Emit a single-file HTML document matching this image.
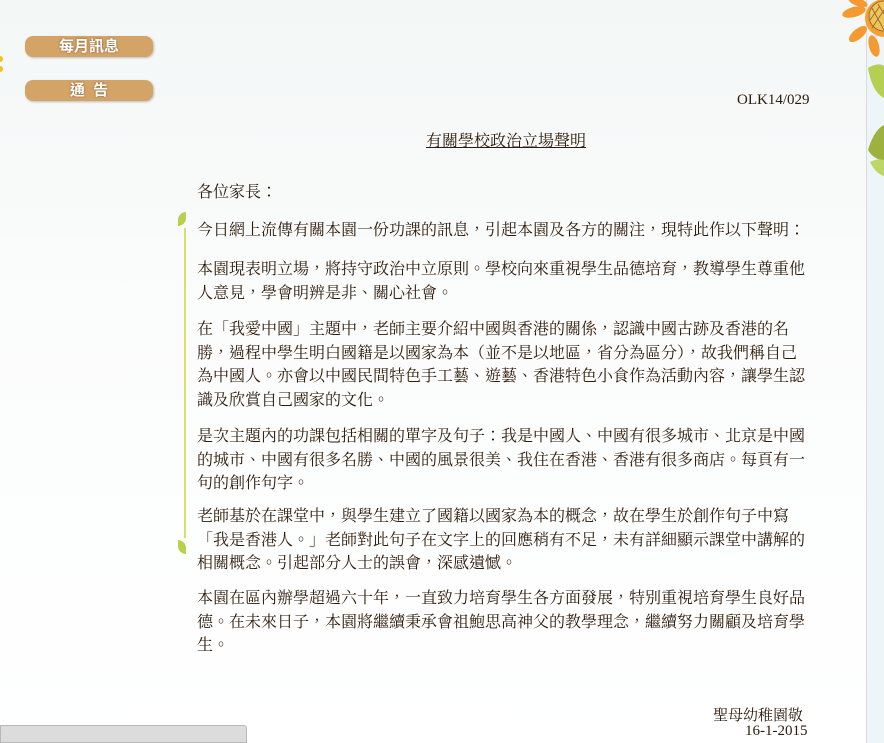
<!DOCTYPE html>
<html lang="zh-Hant"><head><meta charset="utf-8"><style>
html,body{margin:0;padding:0;width:884px;height:743px;overflow:hidden;background:#f4f8f7;}
body{position:relative;font-family:"Liberation Serif","Noto Serif CJK TC","Noto Serif CJK SC",serif;color:#2e1a08;}
.panel{position:absolute;left:0;top:0;width:866px;height:743px;background:linear-gradient(180deg,#f3f7f6 0%,#fbfcfc 40%,#fff 100%);}
.strip{position:absolute;left:866px;top:0;width:18px;height:743px;background:#eef5f8;border-left:1px solid #d8dcdc;}
.btn{position:absolute;left:25px;width:128px;height:21px;background:#d4a366;border-radius:8px;color:#fff;font:bold 15px/21px "Liberation Sans","Noto Sans CJK TC",sans-serif;text-align:center;box-shadow:1px 1px 2px #bbb;text-shadow:0 0 2px #7a5a30;}
.p{position:absolute;left:197px;width:620px;font-size:16px;line-height:23.5px;}
.vline{position:absolute;left:184px;top:228px;width:2px;height:310px;background:#d6e06a;}
.leaf{position:absolute;width:8px;height:14px;background:#b9d04a;border-radius:8px 0 8px 0;}
</style></head><body>
<div class="panel"></div>
<div class="strip"></div>
<svg style="position:absolute;left:840px;top:0" width="44" height="200">
<g fill="#f59a30"><ellipse cx="14" cy="12" rx="12" ry="5" transform="rotate(-15 14 12)"/><ellipse cx="18" cy="34" rx="11" ry="5" transform="rotate(-40 18 34)"/><ellipse cx="34" cy="46" rx="5" ry="11" transform="rotate(-15 34 46)"/><ellipse cx="18" cy="2" rx="10" ry="4" transform="rotate(20 18 2)"/></g>
<circle cx="44" cy="18" r="19" fill="#f5a034"/>
<circle cx="44" cy="16" r="15" fill="#edc65a" stroke="#a06a30" stroke-width="1"/>
<path d="M32 8 L44 30 M38 4 L44 14 M30 20 L40 6 M32 28 L44 10" stroke="#a06a30" stroke-width="1"/>
<path d="M28 68 Q38 62 44 66 L44 98 Q32 92 28 68Z" fill="#b4cf52"/>
<path d="M28 150 Q34 130 44 125 L44 160 Q34 160 28 150Z" fill="#9db13f"/>
<path d="M30 162 Q38 158 44 160 L44 176 Q36 174 30 162Z" fill="#bcd66a"/>
</svg>
<svg style="position:absolute;left:0;top:55px" width="6" height="20"><circle cx="0" cy="4" r="3" fill="#f2c21a"/><circle cx="0" cy="14" r="3" fill="#f2c21a"/></svg>
<div class="btn" style="top:36px">每月訊息</div>
<div class="btn" style="top:80px">通&nbsp;&nbsp;告</div>
<div style="position:absolute;left:737px;top:92px;font-size:15px;">OLK14/029</div>
<div style="position:absolute;left:426px;top:128px;font-size:16px;text-decoration:underline;">有關學校政治立場聲明</div>
<div class="vline"></div>
<div class="leaf" style="left:178px;top:212px"></div>
<div class="leaf" style="left:178px;top:540px;border-radius:0 8px 0 8px"></div>
<div class="p" style="top:181px">各位家長：</div>
<div class="p" style="top:219px">今日網上流傳有關本園一份功課的訊息，引起本園及各方的關注，現特此作以下聲明：</div>
<div class="p" style="top:258px">本園現表明立場，將持守政治中立原則。學校向來重視學生品德培育，教導學生尊重他<br>人意見，學會明辨是非、關心社會。</div>
<div class="p" style="top:318px">在「我愛中國」主題中，老師主要介紹中國與香港的關係，認識中國古跡及香港的名<br>勝，過程中學生明白國籍是以國家為本（並不是以地區，省分為區分），故我們稱自己<br>為中國人。亦會以中國民間特色手工藝、遊藝、香港特色小食作為活動內容，讓學生認<br>識及欣賞自己國家的文化。</div>
<div class="p" style="top:425px">是次主題內的功課包括相關的單字及句子：我是中國人、中國有很多城市、北京是中國<br>的城市、中國有很多名勝、中國的風景很美、我住在香港、香港有很多商店。每頁有一<br>句的創作句字。</div>
<div class="p" style="top:505px">老師基於在課堂中，與學生建立了國籍以國家為本的概念，故在學生於創作句子中寫<br>「我是香港人。」老師對此句子在文字上的回應稍有不足，未有詳細顯示課堂中講解的<br>相關概念。引起部分人士的誤會，深感遺憾。</div>
<div class="p" style="top:587px">本園在區內辦學超過六十年，一直致力培育學生各方面發展，特別重視培育學生良好品<br>德。在未來日子，本園將繼續秉承會祖鮑思高神父的教學理念，繼續努力關顧及培育學<br>生。</div>
<div style="position:absolute;left:713px;top:704px;font-size:15px;">聖母幼稚園敬</div>
<div style="position:absolute;left:745px;top:723px;font-size:15px;">16-1-2015</div>
<div style="position:absolute;left:0;top:725px;width:247px;height:18px;background:#dcdcdc;border:1px solid #b8b8b8;border-radius:0 3px 0 0;box-sizing:border-box;"></div>
</body></html>
